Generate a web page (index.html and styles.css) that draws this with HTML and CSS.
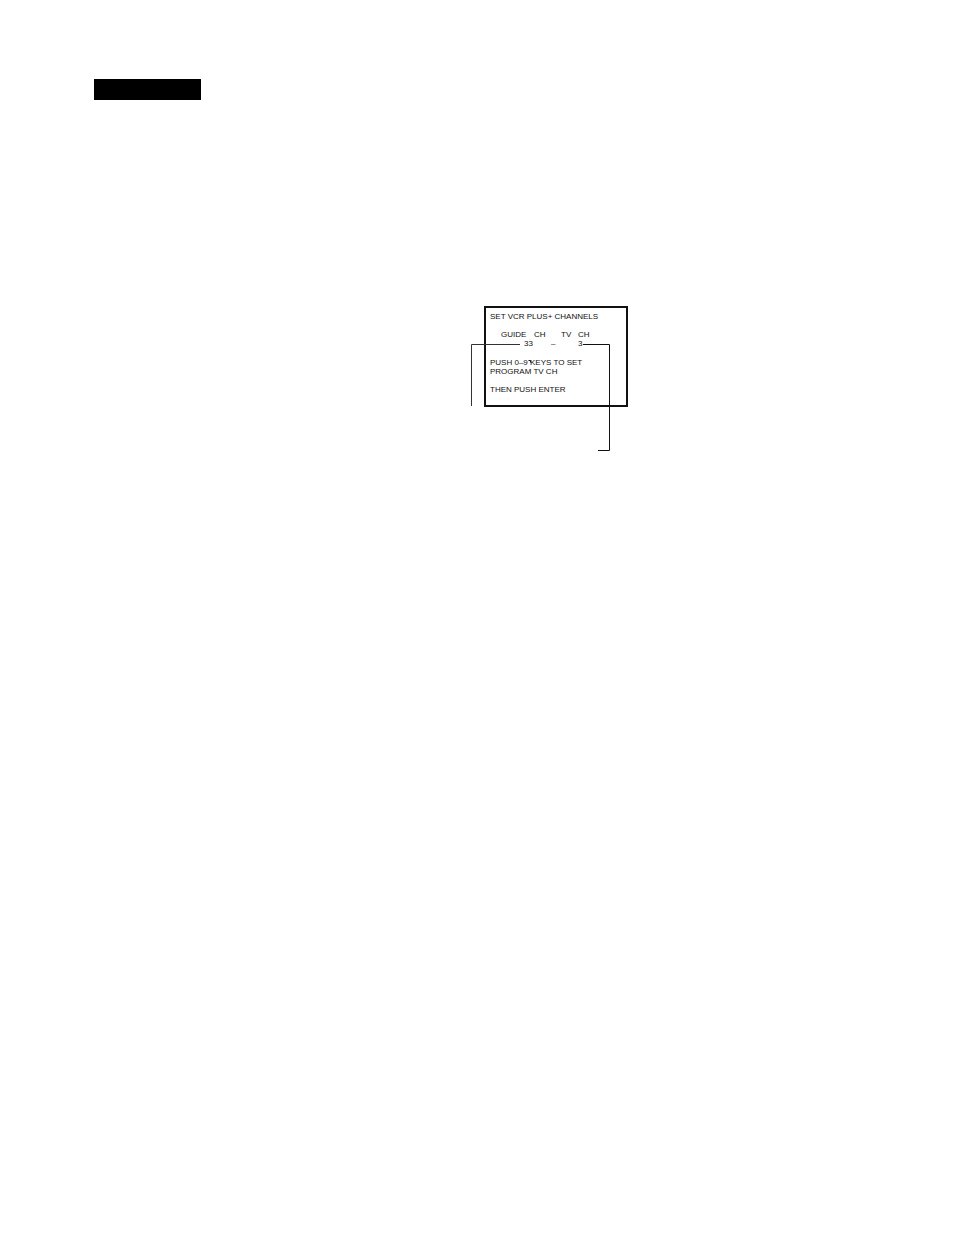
FILE: index.html
```html
<!DOCTYPE html>
<html lang="en">
<head>
    <meta charset="UTF-8">
    <meta name="viewport" content="width=device-width, initial-scale=1.0">
    <title>Set VCR Plus+ Channels</title>
    <link rel="stylesheet" href="styles.css">
</head>
<body>
    <main class="page">
        <div class="section-bar"></div>

        <div class="figure">
            <div class="screen">
                <p>SET VCR PLUS+ CHANNELS</p>

                <div class="channels">
                    <span>GUIDE</span>
                    <span class="guide-ch">CH</span>
                    <span>TV</span>
                    <span>CH</span>
                    <span class="guide-number">33</span>
                    <span class="dash">–</span>
                    <span class="tv-number">3</span>
                </div>

                <p>PUSH 0–9 KEYS TO SET<br>PROGRAM TV CH</p>

                <p>THEN PUSH ENTER</p>
            </div>

            <!-- Callout lines for the two channel numbers -->
            <svg class="callouts" width="160" height="150" viewBox="0 0 160 150" fill="none" stroke="#111" aria-hidden="true">
                <path d="M50 38.500H1.500V100" stroke="#333"/>
                <path d="M113 38.500H139.500V144.500H128"/>
                <path d="M58.500 54.500h2v2"/>
            </svg>
        </div>
    </main>
</body>
</html>
```
FILE: styles.css
```css
* {
    margin: 0;
    padding: 0;
    box-sizing: border-box;
}

body {
    font-family: "Liberation Sans", Arial, sans-serif;
    background: #fff;
    color: #111;
    min-height: 100vh;
}

.page {
    padding: 79px 94px;
}

.section-bar {
    width: 107px;
    height: 21px;
    background: #000;
}

.figure {
    position: relative;
    width: 144px;
    margin: 206px 0 0 390px;
}

.screen {
    display: flex;
    flex-direction: column;
    gap: 9px;
    padding: 4px 4px 11px;
    border: 2px solid #111;
    font-size: 8px;
    line-height: 9px;
    white-space: nowrap;
}

.channels {
    display: grid;
    grid-template-columns: 33px 17px 10px 17px auto;
    padding: 0 0 1px 11px;
}

.guide-ch {
    grid-column: 2 / 4;
}

.guide-number {
    padding-right: 1px;
    text-align: right;
}

.dash {
    grid-column: 3;
}

.tv-number {
    grid-column: 5;
}

.callouts {
    position: absolute;
    top: 0;
    left: -14px;
}
```
